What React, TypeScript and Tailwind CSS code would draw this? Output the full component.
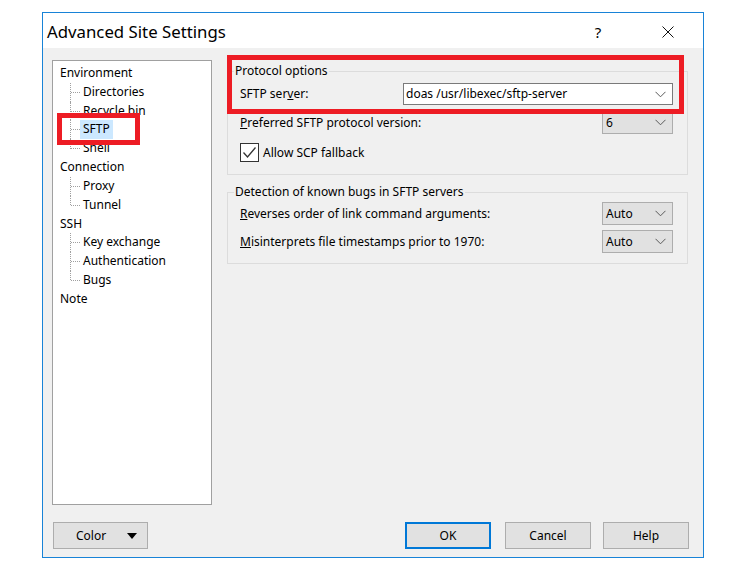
import React from "react";

const font = { fontFamily: '"Noto Sans", "Segoe UI", Arial, sans-serif' };

function Chevron() {
  return (
    <svg width="11" height="7" viewBox="0 0 11 7" className="shrink-0">
      <polyline points="0.5,0.8 5.5,5.8 10.5,0.8" fill="none" stroke="#5a5a5a" strokeWidth="1" />
    </svg>
  );
}

function Combo({ value, w = "w-[71px]" }: { value: string; w?: string }) {
  return (
    <div className={`${w} h-[23px] border border-[#adadad] bg-[#e1e1e1] flex items-center justify-between pl-[3px] pr-[6px]`}>
      <span>{value}</span>
      <Chevron />
    </div>
  );
}

type Item = { label: string; level: 0 | 1; last?: boolean; selected?: boolean };

const items: Item[] = [
  { label: "Environment", level: 0 },
  { label: "Directories", level: 1 },
  { label: "Recycle bin", level: 1 },
  { label: "SFTP", level: 1, selected: true },
  { label: "Shell", level: 1, last: true },
  { label: "Connection", level: 0 },
  { label: "Proxy", level: 1 },
  { label: "Tunnel", level: 1, last: true },
  { label: "SSH", level: 0 },
  { label: "Key exchange", level: 1 },
  { label: "Authentication", level: 1 },
  { label: "Bugs", level: 1, last: true },
  { label: "Note", level: 0 },
];

function TreeRow({ item }: { item: Item }) {
  if (item.level === 0) {
    return (
      <div className="h-[18.8px] flex items-center pl-[7px] whitespace-nowrap">{item.label}</div>
    );
  }
  return (
    <div className="relative h-[18.8px] flex items-center pl-[27px] whitespace-nowrap">
      <div
        className={`absolute left-[17px] top-0 w-0 border-l border-dotted border-[#a0a0a0] ${item.last ? "h-[9.4px]" : "h-full"}`}
      />
      <div className="absolute left-[18px] top-[9px] w-[9px] h-0 border-t border-dotted border-[#a0a0a0]" />
      <span className={`px-[3px] leading-[18.8px] ${item.selected ? "bg-[#cce8ff]" : ""}`}>{item.label}</span>
    </div>
  );
}

function Group({ title, children, className = "" }: { title: string; children: React.ReactNode; className?: string }) {
  return (
    <div className={`relative border border-[#dcdcdc] ${className}`}>
      <span className="absolute left-[6px] -top-[10px] bg-[#f0f0f0] px-[1px] leading-[18px]">{title}</span>
      {children}
    </div>
  );
}

function Button({ children, primary = false, className = "" }: { children: React.ReactNode; primary?: boolean; className?: string }) {
  return (
    <div
      className={`h-[27px] bg-[#e1e1e1] flex items-center ${primary ? "border-2 border-[#0078d7]" : "border border-[#adadad]"} ${className}`}
    >
      {children}
    </div>
  );
}

export default function App() {
  return (
    <div className="relative w-[737px] h-[576px] bg-white pt-[12px] pl-[42px] text-[12px] text-black" style={font}>
      <div className="w-[662px] h-[546px] border border-[#1883d7] flex flex-col">
        {/* Title bar */}
        <div className="h-[35px] bg-white flex items-center pl-[4px]">
          <span className="text-[16.8px] leading-none mt-[3px]">Advanced Site Settings</span>
          <div className="ml-auto flex items-center h-full pr-[12px]">
            <div className="w-[46px] h-full flex items-center justify-center text-[15px] mt-[3px]">?</div>
            <div className="w-[24px]" />
            <div className="w-[46px] h-full flex items-center justify-center mt-[3px]">
              <svg width="12" height="12" viewBox="0 0 12 12">
                <path d="M0.5 0.5 L11.5 11.5 M11.5 0.5 L0.5 11.5" stroke="#111" strokeWidth="1" />
              </svg>
            </div>
          </div>
        </div>

        {/* Body */}
        <div className="flex-1 bg-[#f0f0f0] pl-[9px] pr-[15px] pt-[12px] pb-[8px] flex flex-col">
          <div className="flex gap-[15px]">
            {/* Tree */}
            <div className="w-[160px] h-[445px] bg-white border border-[#a0a0a0] pt-[3px]">
              {items.map((it) => (
                <TreeRow key={it.label} item={it} />
              ))}
            </div>

            {/* Right panel */}
            <div className="w-[461px] flex flex-col">
              <Group title="Protocol options" className="mt-[11px] pt-[11px] pb-[12px] pl-[12px] pr-[14px]">
                <div className="h-[22px] flex items-center justify-between">
                  <span>
                    SFTP ser<span className="underline">v</span>er:
                  </span>
                  <div className="w-[270px] h-[22px] bg-white border border-[#7a7a7a] flex items-center justify-between pl-[2px] pr-[6px]">
                    <span>doas /usr/libexec/sftp-server</span>
                    <Chevron />
                  </div>
                </div>
                <div className="mt-[6px] h-[23px] flex items-center justify-between">
                  <span>
                    <span className="underline">P</span>referred SFTP protocol version:
                  </span>
                  <Combo value="6" />
                </div>
                <div className="mt-[9px] h-[19px] flex items-center">
                  <div className="w-[19px] h-[19px] bg-white border border-[#333] flex items-center justify-center">
                    <svg width="15" height="13" viewBox="0 0 15 13">
                      <polyline points="1.5,6.5 5.5,11 13.5,1.5" fill="none" stroke="#333" strokeWidth="1.3" />
                    </svg>
                  </div>
                  <span className="ml-[4px]">Allow SCP fallback</span>
                </div>
              </Group>

              <Group title="Detection of known bugs in SFTP servers" className="mt-[17px] pt-[9px] pb-[10px] pl-[12px] pr-[14px]">
                <div className="h-[23px] flex items-center justify-between">
                  <span>
                    <span className="underline">R</span>everses order of link command arguments:
                  </span>
                  <Combo value="Auto" />
                </div>
                <div className="mt-[5px] h-[23px] flex items-center justify-between">
                  <span>
                    <span className="underline">M</span>isinterprets file timestamps prior to 1970:
                  </span>
                  <Combo value="Auto" />
                </div>
              </Group>
            </div>
          </div>

          {/* Buttons */}
          <div className="mt-[17px] flex">
            <Button className="ml-[1px] w-[95px] justify-between pl-[22px] pr-[10px]">
              <span>Color</span>
              <svg width="10" height="6" viewBox="0 0 10 6">
                <polygon points="0,0 10,0 5,6" fill="#000" />
              </svg>
            </Button>
            <div className="ml-auto flex -mr-[1px]">
              <Button primary className="w-[86px] justify-center">OK</Button>
              <Button className="w-[86px] ml-[14px] justify-center">Cancel</Button>
              <Button className="w-[86px] ml-[12px] justify-center">Help</Button>
            </div>
          </div>
        </div>
      </div>

      {/* Red annotation boxes */}
      <div className="absolute left-[57px] top-[113px] w-[83px] h-[32px] border-[5px] border-[#ed1c24]" />
      <div className="absolute left-[227px] top-[55px] w-[457px] h-[59px] border-[5px] border-[#ed1c24]" />
    </div>
  );
}
